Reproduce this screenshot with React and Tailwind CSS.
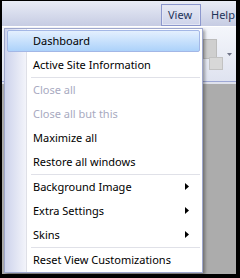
import React from "react";

const items = [
  { label: "Dashboard", active: true },
  { label: "Active Site Information" },
  { sep: true },
  { label: "Close all", disabled: true },
  { label: "Close all but this", disabled: true },
  { label: "Maximize all" },
  { label: "Restore all windows" },
  { sep: true },
  { label: "Background Image", sub: true },
  { label: "Extra Settings", sub: true },
  { label: "Skins", sub: true },
  { sep: true },
  { label: "Reset View Customizations" },
];

function Arrow() {
  return (
    <svg width="4" height="7" viewBox="0 0 4 7" className="shrink-0">
      <path d="M0 0L4 3.5L0 7Z" fill="#000" />
    </svg>
  );
}

function MenuRow({ item }) {
  if (item.sep) {
    return <div className="h-px ml-[25px] mr-px bg-[#e0e1e8]" />;
  }
  return (
    <div className="h-[24px] p-px">
      <div
        className={
          item.active
            ? "h-full flex items-center pl-[25px] pr-[10px] pb-[2px] border border-[#a3b7e6] rounded-[2px] bg-gradient-to-b from-[#e4f0fe] to-[#acd2fa]"
            : "h-full flex items-center pl-[25px] pr-[10px] pb-[2px] border border-transparent"
        }
      >
        <span
          className={
            item.disabled
              ? "flex-1 text-[#a8aabf]"
              : "flex-1 text-black"
          }
        >
          {item.label}
        </span>
        {item.sub && <Arrow />}
      </div>
    </div>
  );
}

export default function App() {
  return (
    <div className="w-[240px] h-[278px] bg-black pt-px pl-[2px] pr-[4px] pb-[4px] font-['Noto_Sans',sans-serif] text-[11px] leading-none">
      <div className="relative h-full flex flex-col bg-[#acacac]">
        {/* Menu bar */}
        <div className="h-[26px] shrink-0 flex items-start bg-gradient-to-b from-[#e9ecf6] to-[#c6cce3] border-b border-white text-[#1d3358]">
          <div className="ml-[159px] mt-[3px] h-[22px] w-[40px] flex items-center pl-[6px] pb-[2px] border border-[#8c97cd] shadow-[inset_0_0_0_1px_#e3e6f3] bg-gradient-to-b from-[#e6e9f5] to-[#cfd4ea]">
            View
          </div>
          <div className="mt-[3px] h-[22px] flex items-center pl-[10px] pb-[2px]">Help</div>
        </div>

        {/* Toolbar */}
        <div className="h-[54px] shrink-0 flex justify-end bg-gradient-to-b from-[#f4f6fb] to-[#dfe3f0]">
          <svg width="34" height="54" viewBox="0 0 34 54">
            <rect x="1.5" y="12.5" width="13" height="19" fill="#cfcfcf" stroke="#bcbcbc" />
            <rect x="7.5" y="30.5" width="13" height="12" fill="#d8d8d8" stroke="#c2c2c2" />
            <path d="M25 26H30L27.5 29Z" fill="#6f7488" />
          </svg>
        </div>
        <div className="h-px shrink-0 bg-[#9ea8d5]" />
        <div className="h-[2px] shrink-0 bg-[#dfe2ed]" />
        <div className="flex-1" />

        {/* Dropdown */}
        <div className="absolute left-[2px] top-[27px] w-[199px] border border-[#9ea7cd] px-px bg-[linear-gradient(to_right,#cdd3ec_0px,#f3f4fa_21px,#dfe0e7_21px,#dfe0e7_22px,#ffffff_22px)] shadow-[2px_2px_3px_rgba(0,0,0,0.35)]">
          {items.map((item, i) => (
            <MenuRow key={i} item={item} />
          ))}
        </div>
      </div>
    </div>
  );
}
